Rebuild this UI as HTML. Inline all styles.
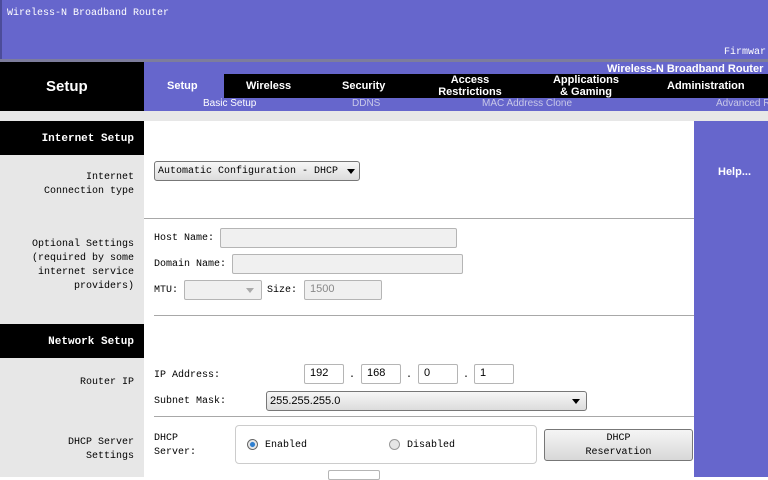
<!DOCTYPE html>
<html><head><meta charset="utf-8"><style>
*{margin:0;padding:0;box-sizing:border-box}
body{width:768px;height:477px;overflow:hidden;background:#fff;position:relative;font-family:"Liberation Mono",monospace;font-size:10px;color:#000}
.a{position:absolute}
.b{font-family:"Liberation Sans",sans-serif;font-weight:bold;color:#fff}
.in{position:absolute;border:1px solid #b5b5b5;border-radius:2px;background:#fff;height:20px;font-family:"Liberation Sans",sans-serif;font-size:11px;padding:2px 5px}
.lab{text-align:right;line-height:14px}
.hr{position:absolute;height:1px;background:#a8a8a8}
.sel{position:absolute;border:1px solid #777;border-radius:3px;background:linear-gradient(#f7f7f7,#dcdcdc);height:20px}
.tri{position:absolute;width:0;height:0;border-left:4px solid transparent;border-right:4px solid transparent;border-top:5px solid #000}
</style></head><body>
<div class="a" style="left:0;top:0;width:768px;height:61px;background:#6666cc;border-left:2px solid #4c4c99"></div>
<div class="a" style="left:7px;top:8px;color:#fff">Wireless-N Broadband Router</div>
<div class="a" style="left:724px;top:47px;color:#fff">Firmwar</div>
<div class="a" style="left:0;top:59px;width:768px;height:3px;background:#7d7d9c"></div>
<div class="a" style="left:0;top:62px;width:144px;height:49px;background:#000"></div>
<div class="a b" style="left:46px;top:78px;font-size:15px">Setup</div>
<div class="a" style="left:144px;top:62px;width:624px;height:49px;background:#6666cc"></div>
<div class="a b" style="left:607px;top:63px;font-size:11px;white-space:nowrap">Wireless-N Broadband Router</div>
<div class="a" style="left:224px;top:74px;width:544px;height:24px;background:#000"></div>
<div class="a b" style="left:167px;top:80px;font-size:11px">Setup</div>
<div class="a b" style="left:246px;top:80px;font-size:11px">Wireless</div>
<div class="a b" style="left:342px;top:80px;font-size:11px">Security</div>
<div class="a b" style="left:430px;top:74px;font-size:11px;line-height:12px;text-align:center;width:80px">Access<br>Restrictions</div>
<div class="a b" style="left:546px;top:74px;font-size:11px;line-height:12px;text-align:center;width:80px">Applications<br>&amp; Gaming</div>
<div class="a b" style="left:667px;top:80px;font-size:11px">Administration</div>
<div class="a" style="left:203px;top:98px;font-family:'Liberation Sans',sans-serif;font-size:10px;color:#fff">Basic Setup</div>
<div class="a" style="left:352px;top:98px;font-family:'Liberation Sans',sans-serif;font-size:10px;color:#c8c8e8">DDNS</div>
<div class="a" style="left:482px;top:98px;font-family:'Liberation Sans',sans-serif;font-size:10px;color:#c8c8e8">MAC Address Clone</div>
<div class="a" style="left:716px;top:98px;font-family:'Liberation Sans',sans-serif;font-size:10px;color:#c8c8e8;white-space:nowrap">Advanced R</div>
<div class="a" style="left:0;top:111px;width:768px;height:10px;background:#e7e7e7"></div>
<div class="a" style="left:0;top:121px;width:144px;height:356px;background:#e7e7e7"></div>
<div class="a" style="left:0;top:121px;width:144px;height:34px;background:#000"></div>
<div class="a" style="left:0;top:324px;width:144px;height:34px;background:#000"></div>
<div class="a" style="left:0;top:133px;width:134px;text-align:right;color:#fff;font-weight:bold;font-size:11px">Internet Setup</div>
<div class="a" style="left:0;top:336px;width:134px;text-align:right;color:#fff;font-weight:bold;font-size:11px">Network Setup</div>
<div class="a" style="left:694px;top:121px;width:74px;height:356px;background:#6666cc"></div>
<div class="a b" style="left:718px;top:166px;font-size:11px">Help...</div>
<div class="a lab" style="left:0;top:171px;width:134px">Internet<br>Connection type</div>
<div class="a lab" style="left:0;top:238px;width:134px">Optional Settings<br>(required by some<br>internet service<br>providers)</div>
<div class="a lab" style="left:0;top:376px;width:134px">Router IP</div>
<div class="a lab" style="left:0;top:436px;width:134px">DHCP Server<br>Settings</div>
<div class="sel" style="left:154px;top:161px;width:206px"></div>
<div class="a" style="left:158px;top:166px">Automatic Configuration - DHCP</div>
<div class="tri" style="left:347px;top:169px"></div>
<div class="hr" style="left:144px;top:218px;width:550px"></div>
<div class="a" style="left:154px;top:233px">Host Name:</div>
<div class="in" style="left:220px;top:228px;width:237px;background:#f0f0f0"></div>
<div class="a" style="left:154px;top:259px">Domain Name:</div>
<div class="in" style="left:232px;top:254px;width:231px;background:#f0f0f0"></div>
<div class="a" style="left:154px;top:285px">MTU:</div>
<div class="in" style="left:184px;top:280px;width:78px;background:#f0f0f0"></div>
<div class="tri" style="left:246px;top:288px;border-top-color:#aaa"></div>
<div class="a" style="left:267px;top:285px">Size:</div>
<div class="in" style="left:304px;top:280px;width:78px;background:#f0f0f0;color:#888">1500</div>
<div class="hr" style="left:154px;top:315px;width:540px"></div>
<div class="a" style="left:154px;top:370px">IP Address:</div>
<div class="in" style="left:304px;top:364px;width:40px">192</div>
<div class="a" style="left:349px;top:370px">.</div>
<div class="in" style="left:361px;top:364px;width:40px">168</div>
<div class="a" style="left:406px;top:370px">.</div>
<div class="in" style="left:418px;top:364px;width:40px">0</div>
<div class="a" style="left:463px;top:370px">.</div>
<div class="in" style="left:474px;top:364px;width:40px">1</div>
<div class="a" style="left:154px;top:396px">Subnet Mask:</div>
<div class="sel" style="left:266px;top:391px;width:321px"></div>
<div class="a" style="left:270px;top:395px;font-family:'Liberation Sans',sans-serif;font-size:11px">255.255.255.0</div>
<div class="tri" style="left:572px;top:399px"></div>
<div class="hr" style="left:154px;top:416px;width:540px"></div>
<div class="a" style="left:154px;top:432px;line-height:14px">DHCP<br>Server:</div>
<div class="a" style="left:235px;top:425px;width:302px;height:39px;border:1px solid #ccc;border-radius:4px"></div>
<div class="a" style="left:247px;top:439px;width:11px;height:11px;border-radius:50%;border:1px solid #666;background:radial-gradient(#2f7fd0 35%,#e8e8e8 45%)"></div>
<div class="a" style="left:265px;top:440px">Enabled</div>
<div class="a" style="left:389px;top:439px;width:11px;height:11px;border-radius:50%;border:1px solid #999;background:#e6e6e6"></div>
<div class="a" style="left:407px;top:440px">Disabled</div>
<div class="a" style="left:544px;top:429px;width:149px;height:32px;border:1px solid #777;border-radius:3px;background:linear-gradient(#f5f5f5,#d8d8d8);text-align:center;line-height:14px;padding-top:2px">DHCP<br>Reservation</div>
<div class="a" style="left:328px;top:470px;width:52px;height:10px;border:1px solid #b5b5b5;border-radius:2px"></div>
</body></html>
